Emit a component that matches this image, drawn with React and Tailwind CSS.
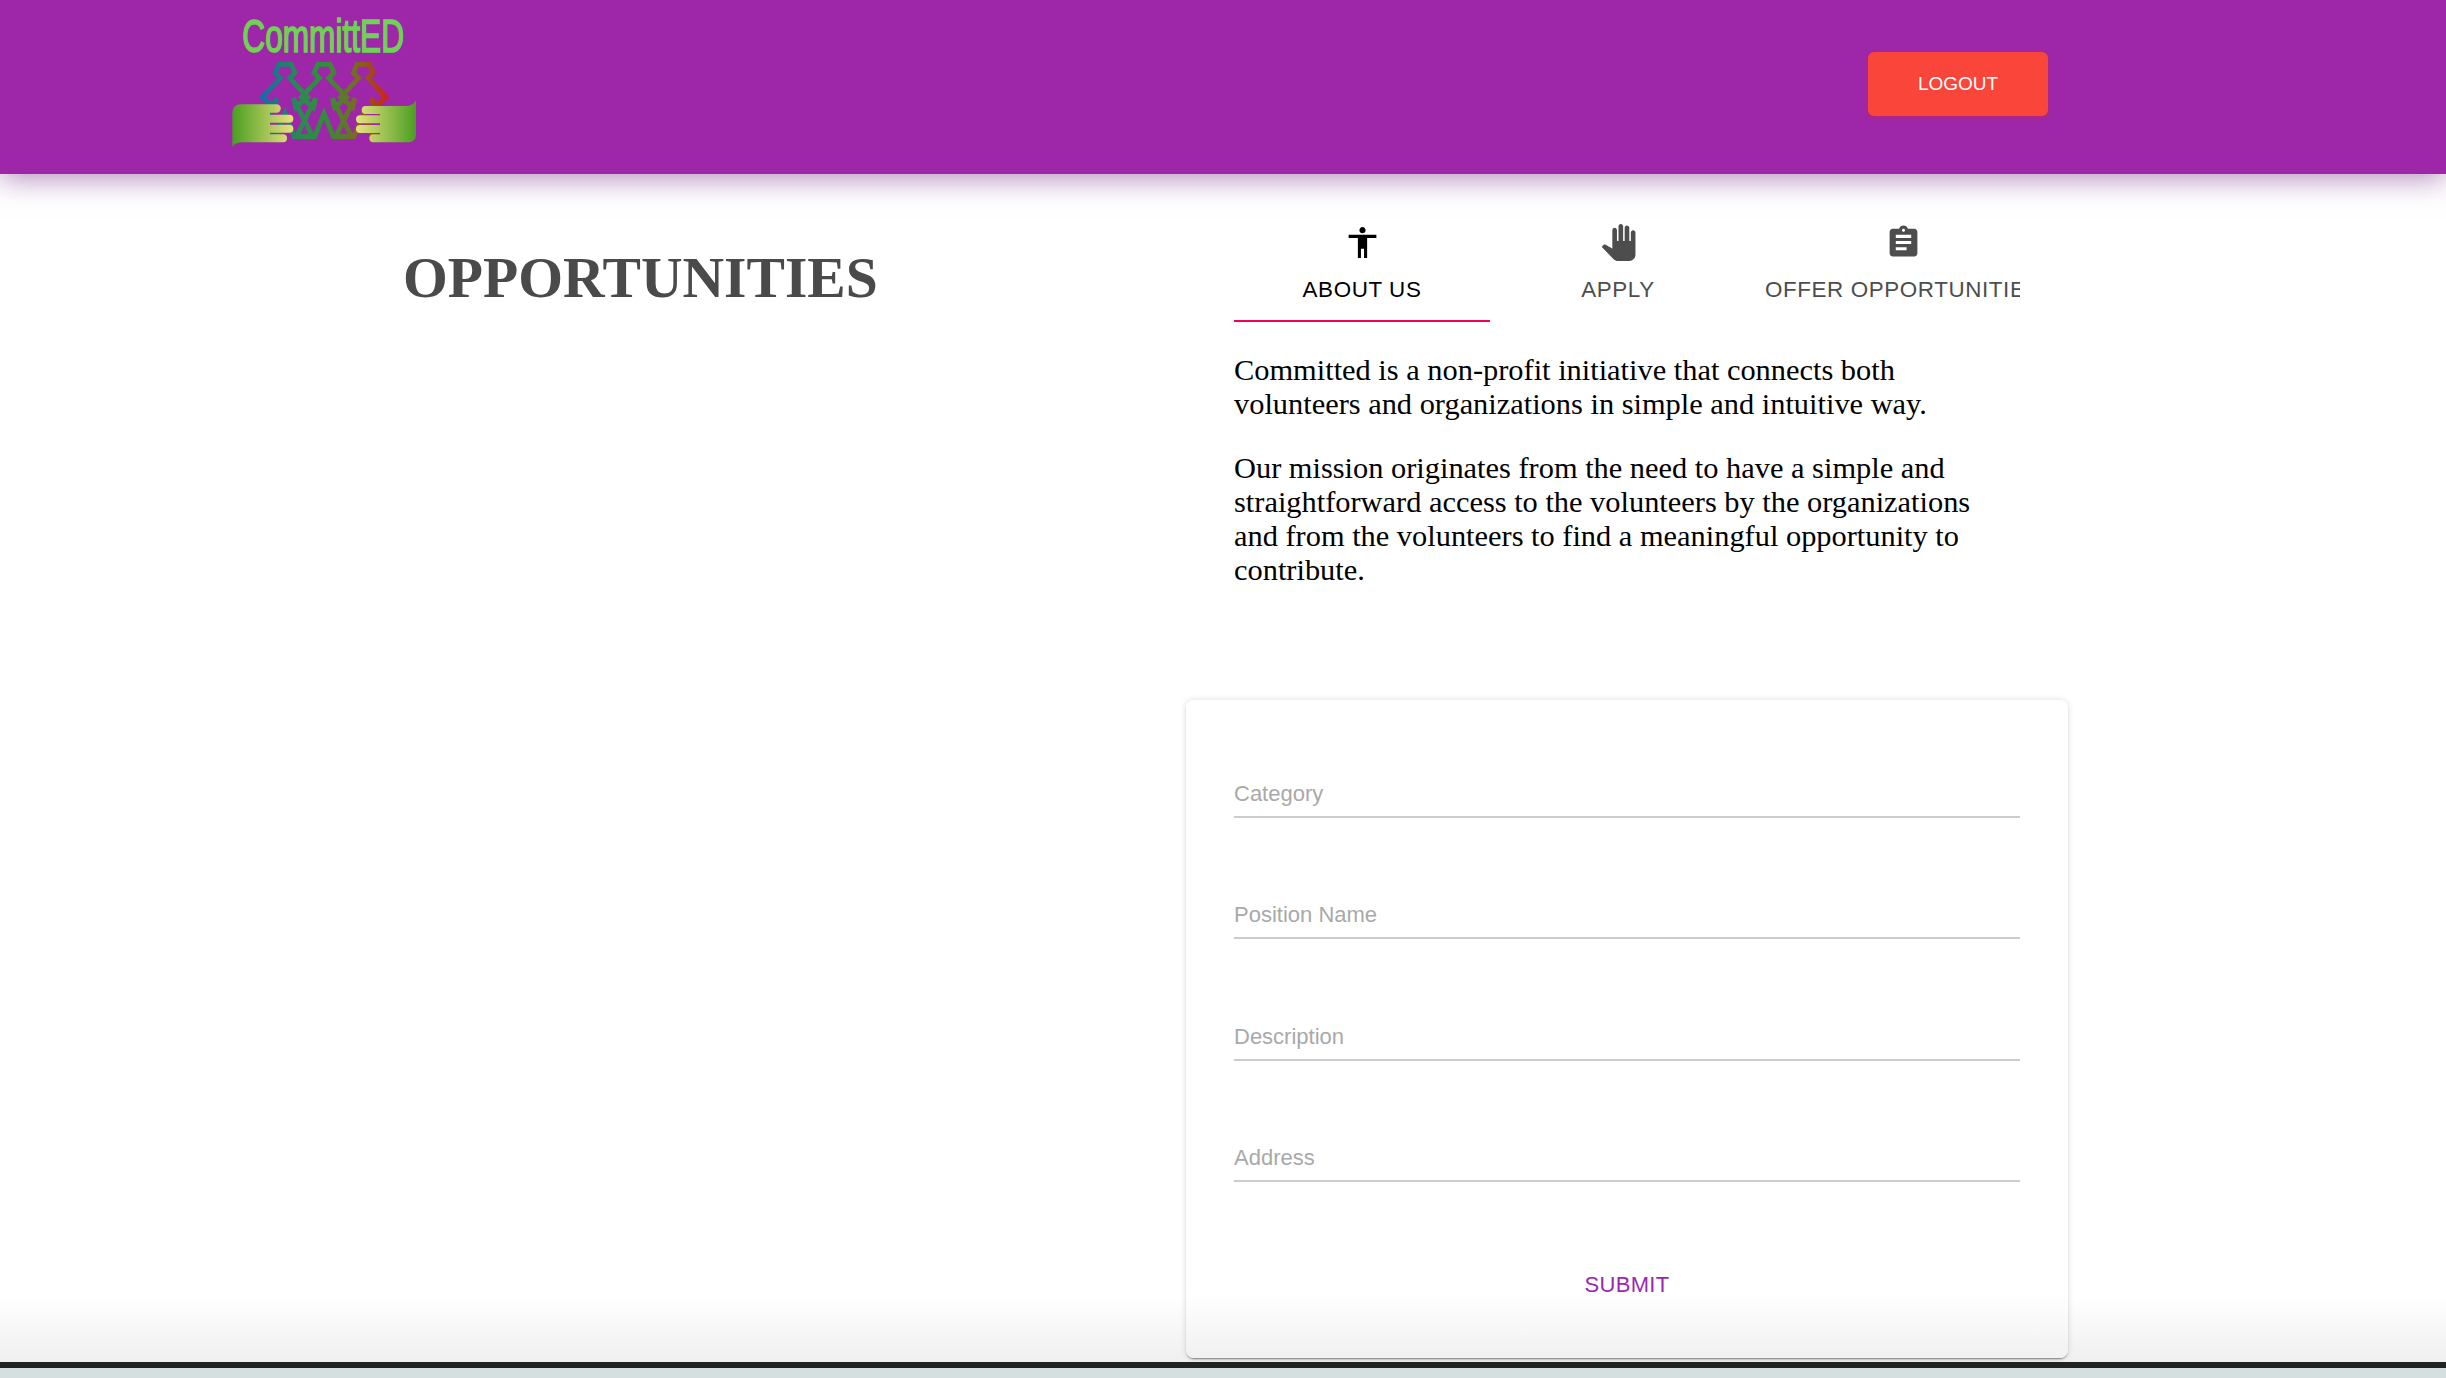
import React from "react";

const personPoints = [
  [-18, 193], [18, 193], [30, 218], [14, 234], [68, 292], [32, 322], [25, 295], [83, 410],
  [28, 410], [0, 340], [-28, 410], [-83, 410], [-25, 295], [-32, 322], [-68, 292], [-14, 234], [-30, 218],
];

const personPath = (cx) =>
  "M" + personPoints.map(([x, y]) => `${cx + x} ${y}`).join(" L") + " Z";

const Logo = () => (
  <svg width="260" height="174" viewBox="0 0 780 522">
    <defs>
      <linearGradient id="people" gradientUnits="userSpaceOnUse" x1="185" y1="0" x2="565" y2="0">
        <stop offset="0" stopColor="#0f6fa8" />
        <stop offset="0.3" stopColor="#2a8a50" />
        <stop offset="0.5" stopColor="#2f8f3a" />
        <stop offset="0.75" stopColor="#7a6a20" />
        <stop offset="1" stopColor="#d41f10" />
      </linearGradient>
      <linearGradient id="handLeft" gradientUnits="userSpaceOnUse" x1="97" y1="0" x2="280" y2="0">
        <stop offset="0" stopColor="#4a9e22" />
        <stop offset="1" stopColor="#e8e27e" />
      </linearGradient>
      <linearGradient id="handRight" gradientUnits="userSpaceOnUse" x1="468" y1="0" x2="648" y2="0">
        <stop offset="0" stopColor="#e8e27e" />
        <stop offset="1" stopColor="#4a9e22" />
      </linearGradient>
    </defs>
    <text
      x="127"
      y="155"
      fontSize="140"
      textLength="485"
      lengthAdjust="spacingAndGlyphs"
      fill="#6fd254"
      stroke="#6fd254"
      strokeWidth="5"
      className="font-['Liberation_Sans_Narrow','Liberation_Sans',sans-serif]"
    >
      CommittED
    </text>
    {[255, 372, 490].map((cx) => (
      <path
        key={cx}
        d={personPath(cx)}
        fill="none"
        stroke="url(#people)"
        strokeWidth="14"
        strokeLinejoin="miter"
      />
    ))}
    <g fill="url(#handLeft)">
      <path d="M97 440 L97 340 Q97 313 124 313 L230 313 A12 12 0 0 1 230 338 L210 338 L210 427 L130 427 Q105 427 97 440 Z" />
      <rect x="200" y="344" width="80" height="24" rx="12" />
      <rect x="200" y="374" width="80" height="24" rx="12" />
      <rect x="200" y="403" width="61" height="24" rx="12" />
    </g>
    <g fill="url(#handRight)">
      <path d="M648 300 L648 405 Q648 427 625 427 L540 427 L540 342 L497 342 A12 12 0 0 1 497 318 L615 318 Q640 318 648 300 Z" />
      <rect x="468" y="346" width="80" height="24" rx="12" />
      <rect x="468" y="375" width="80" height="24" rx="12" />
      <rect x="508" y="403" width="40" height="24" rx="12" />
    </g>
  </svg>
);

const TabIcon = ({ d, className }) => (
  <svg viewBox="0 0 24 24" width="37" height="37" fill="currentColor" className={className}>
    <path d={d} />
  </svg>
);

const tabs = [
  {
    label: "ABOUT US",
    width: "w-[256px]",
    color: "text-black",
    d: "M12 2c1.1 0 2 .9 2 2s-.9 2-2 2-2-.9-2-2 .9-2 2-2zm9 7h-6v13h-2v-6h-2v6H9V9H3V7h18v2z",
  },
  {
    label: "APPLY",
    width: "w-[256px]",
    color: "text-[#4d4d4d]",
    d: "M23 5.5V20c0 2.2-1.8 4-4 4h-7.3c-1.08 0-2.1-.43-2.85-1.19L1 14.83s1.26-1.23 1.3-1.25c.22-.19.49-.29.79-.29.22 0 .42.06.6.16.04.01 4.31 2.46 4.31 2.46V4c0-.83.67-1.5 1.5-1.5S11 3.17 11 4v7h1V1.5c0-.83.67-1.5 1.5-1.5S15 .67 15 1.5V11h1V2.5c0-.83.67-1.5 1.5-1.5s1.5.67 1.5 1.5V11h1V5.5c0-.83.67-1.5 1.5-1.5s1.5.67 1.5 1.5z",
  },
  {
    label: "OFFER OPPORTUNITIES",
    width: "w-[314px]",
    color: "text-[#4d4d4d]",
    d: "M19 3h-4.18C14.4 1.84 13.3 1 12 1c-1.3 0-2.4.84-2.82 2H5c-1.1 0-2 .9-2 2v14c0 1.1.9 2 2 2h14c1.1 0 2-.9 2-2V5c0-1.1-.9-2-2-2zm-7 0c.55 0 1 .45 1 1s-.45 1-1 1-1-.45-1-1 .45-1 1-1zm2 14H7v-2h7v2zm3-4H7v-2h10v2zm0-4H7V7h10v2z",
  },
];

const fields = ["Category", "Position Name", "Description", "Address"];

export default function App() {
  return (
    <div className="relative flex h-screen flex-col overflow-hidden bg-white font-['Liberation_Sans',Arial,sans-serif]">
      {/* Header */}
      <header className="relative z-10 flex h-[174px] shrink-0 items-start justify-between bg-[#9e27a9] pl-[200px] pr-[398px] shadow-[0_4px_28px_rgba(110,40,130,0.55)]">
        <Logo />
        <button className="mt-[52px] h-[64px] w-[180px] rounded-[6px] bg-[#f9453a] text-[19px] text-white shadow-[0_2px_4px_rgba(200,40,40,0.4)]">
          LOGOUT
        </button>
      </header>

      <main className="flex min-h-0 flex-1 bg-gradient-to-b from-white from-[94.5%] to-[#efefef]">
        <div className="w-[1186px] shrink-0 pl-[403px] pt-[74px]">
          <h1 className="font-['Liberation_Serif',serif] text-[57.6px] font-bold leading-[60px] text-[#4a4a4a]">
            OPPORTUNITIES
          </h1>
        </div>

        <div className="w-[882px] shrink-0">
          <div className="px-[48px]">
            {/* Tabs */}
            <div className="mt-[26px] flex h-[122px] overflow-hidden">
              {tabs.map((tab, i) => (
                <div
                  key={tab.label}
                  className={`flex h-full shrink-0 flex-col items-center ${tab.width} ${tab.color} ${
                    i === 0 ? "border-b-[2px] border-[#f50057]" : ""
                  }`}
                >
                  <TabIcon d={tab.d} className="mt-[24px]" />
                  <span className="mt-[14px] whitespace-nowrap text-[22.4px] leading-[30px] tracking-[0.6px]">
                    {tab.label}
                  </span>
                </div>
              ))}
            </div>

            {/* About text */}
            <div className="mt-[31px] pr-[30px] font-['Liberation_Serif',serif] text-[30.4px] leading-[34px] text-black">
              <p>Committed is a non-profit initiative that connects both volunteers and organizations in simple and intuitive way.</p>
              <p className="mt-[30px]">
                Our mission originates from the need to have a simple and straightforward access to the volunteers by the organizations and from the volunteers to find a meaningful opportunity to contribute.
              </p>
            </div>
          </div>

          {/* Form card */}
          <div className="mt-[113px] h-[658px] rounded-[8px] bg-gradient-to-b from-white from-[90%] to-[#f1f1f1] px-[48px] shadow-[0_2px_2px_-1px_rgba(0,0,0,0.45),0_0_6px_rgba(0,0,0,0.14)]">
            <div className="flex flex-col gap-[83.33px] pt-[80px]">
              {fields.map((name) => (
                <div key={name} className="h-[38px] border-b-[2px] border-[#cccccc] text-[22px] leading-[28px] text-[#a9a9a9]">
                  {name}
                </div>
              ))}
            </div>
            <div className="mt-[85px] text-center text-[22px] leading-[36px] tracking-[0.3px] text-[#9c27b0]">
              SUBMIT
            </div>
          </div>
        </div>
      </main>

      <div className="relative z-10 h-[6px] shrink-0 bg-[#222222]" />
      <div className="relative z-10 h-[10px] shrink-0 bg-[#d5dfe0]" />
    </div>
  );
}
